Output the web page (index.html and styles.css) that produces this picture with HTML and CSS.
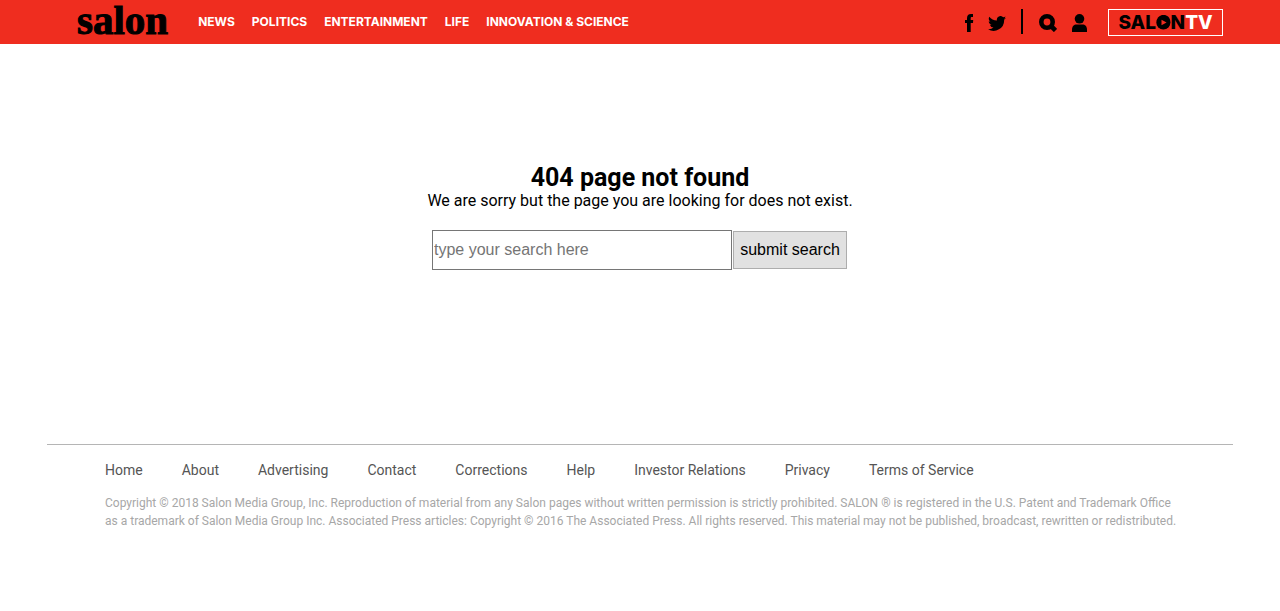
FILE: index.html
```html
<!DOCTYPE html>
<html lang="en">
<head>
<meta charset="utf-8">
<meta name="viewport" content="width=device-width, initial-scale=1">
<title>404 page not found</title>
<link rel="stylesheet" href="styles.css">
</head>
<body>
<header class="header">
  <a class="logo" href="#">salon</a>
  <nav class="nav">
    <a href="#">NEWS</a>
    <a href="#">POLITICS</a>
    <a href="#">ENTERTAINMENT</a>
    <a href="#">LIFE</a>
    <a href="#">INNOVATION &amp; SCIENCE</a>
  </nav>
  <div class="tools">
    <a class="tool facebook" href="#" aria-label="Facebook"><svg width="10" height="18" viewBox="0 0 10 18"><path d="M3 18V9H1V6h2V4.200C3 1.500 4.400 0 7 0h2v3H7.900C7 3 6.700 3.400 6.700 4.200V6H9.200L9 9H6.700v9z"/></svg></a>
    <a class="tool twitter" href="#" aria-label="Twitter"><svg width="18" height="15" viewBox="0 0 24 20"><path d="M24 2.400c-.9.400-1.800.7-2.800.8 1-.6 1.800-1.600 2.200-2.700-1 .6-2 1-3.100 1.200A4.900 4.900 0 0 0 11.900 6.100C7.700 6 4.100 4 1.700 1 .4 3.200 1 6.100 3.200 7.600c-.8 0-1.600-.2-2.200-.6 0 2.300 1.600 4.400 3.900 4.900-.7.200-1.500.2-2.200.1a4.900 4.900 0 0 0 4.600 3.400A9.900 9.900 0 0 1 0 17.500 14 14 0 0 0 21.500 5C22.500 4.300 23.300 3.400 24 2.400z"/></svg></a>
    <span class="divider"></span>
    <button class="tool search" type="button" aria-label="Search"><svg width="18" height="18" viewBox="0 0 18 18"><circle cx="8" cy="8" r="5.700" fill="none" stroke="#000" stroke-width="4.600"/><path d="M11.500 11.500l5 5" stroke="#000" stroke-width="4.600"/></svg></button>
    <a class="tool user" href="#" aria-label="Account"><svg width="15" height="18" viewBox="0 0 15 18"><circle cx="7.500" cy="4.800" r="4.800"/><path d="M0 18v-2c0-4 2-5.500 4.500-5.500h6c2.500 0 4.500 1.500 4.500 5.500v2z"/></svg></a>
    <a class="tv" href="#"><span>SAL</span><span class="play">O<svg viewBox="0 0 16 16"><circle cx="8" cy="8" r="7.600"/><path d="M6 5l5.500 3L6 11z" fill="#ef2d1f"/></svg></span><span>N</span><span class="white">TV</span></a>
  </div>
</header>
<main class="main">
  <h1 class="title">404 page not found</h1>
  <p class="message">We are sorry but the page you are looking for does not exist.</p>
  <form class="form">
    <input class="field" type="text" placeholder="type your search here" aria-label="Search">
    <button class="submit" type="submit">submit search</button>
  </form>
</main>
<footer class="footer">
  <nav class="links">
    <a href="#">Home</a>
    <a href="#">About</a>
    <a href="#">Advertising</a>
    <a href="#">Contact</a>
    <a href="#">Corrections</a>
    <a href="#">Help</a>
    <a href="#">Investor Relations</a>
    <a href="#">Privacy</a>
    <a href="#">Terms of Service</a>
  </nav>
  <p class="legal">Copyright © 2018 Salon Media Group, Inc. Reproduction of material from any Salon pages without written permission is strictly prohibited. SALON ® is registered in the U.S. Patent and Trademark Office as a trademark of Salon Media Group Inc. Associated Press articles: Copyright © 2016 The Associated Press. All rights reserved. This material may not be published, broadcast, rewritten or redistributed.</p>
</footer>
</body>
</html>
```
FILE: styles.css
```css
* { box-sizing: border-box; }
body { margin: 0; background: #fff; color: #000; font-family: Roboto, sans-serif; }
a { color: inherit; text-decoration: none; }
h1, p { margin: 0; }
svg { display: block; }

.header { display: flex; align-items: center; height: 44px; padding: 0 57px 0 77px; background: #ef2d1f; }
.logo { margin-right: 30px; padding-bottom: 3px; font: bold 41px/47px "Liberation Serif", serif; -webkit-text-stroke: 1px #000; }
.nav { display: flex; gap: 17px; color: #fff; font: 700 12px/18px Inter, sans-serif; white-space: nowrap; }
.tools { display: flex; align-items: center; margin-left: auto; }
.tool { padding: 2px 0 0; border: 0; background: none; }
.facebook { margin-right: 14px; }
.twitter { margin-right: 15px; }
.divider { width: 2px; height: 25px; margin: 0 16px 2px 0; background: #000; }
.search { margin-right: 15px; }
.user { margin-right: 21px; }
.tv { display: flex; align-items: center; justify-content: center; width: 115px; height: 27px; border: 1px solid #fff; font: 800 19px/25px Inter, sans-serif; }
.play { position: relative; }
.play svg { position: absolute; top: 5px; left: 0; width: 100%; height: 15px; }
.white { color: #fff; }

.main { padding: 120px 20px 174px; text-align: center; }
.title { font-size: 25px; line-height: 28px; }
.message { font-size: 16px; line-height: 18px; }
.form { display: flex; justify-content: center; align-items: center; gap: 1px; margin-top: 20px; padding-right: 1px; }
.field { width: 300px; height: 40px; padding: 1px; border: 1px solid #767676; border-radius: 0; font: 16px "Liberation Sans", sans-serif; }
.field::placeholder { color: #757575; }
.submit { min-width: 114px; height: 38px; padding: 1px 6px; border: 1px solid #adadad; background: #e1e1e1; color: #000; font: 16px "Liberation Sans", sans-serif; }

.footer { margin: 0 47px; padding: 16px 52px 80px 58px; border-top: 1px solid #b5b5b5; }
.links { display: flex; flex-wrap: wrap; gap: 0 39px; color: #555; font-size: 14px; line-height: 18px; }
.legal { margin-top: 15px; color: #a7a7a7; font-size: 12px; line-height: 18px; }
```
